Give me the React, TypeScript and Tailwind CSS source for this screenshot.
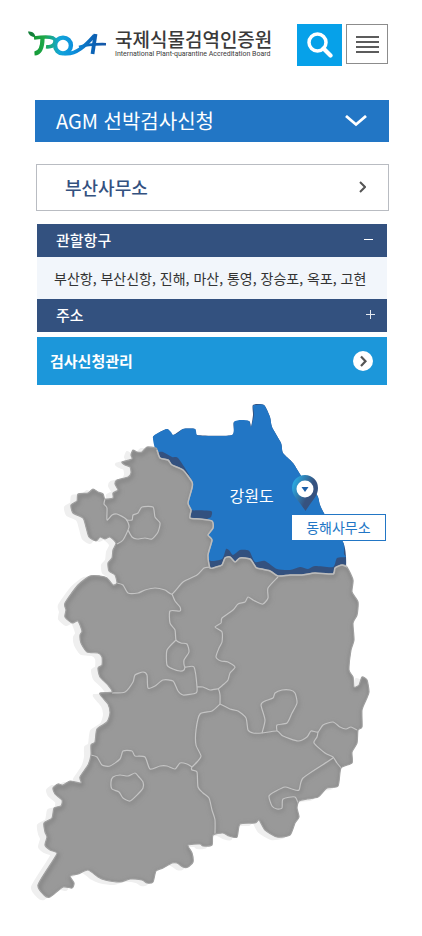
import { useState } from "react";

type Pt = [number, number];

function parse(s: string): Pt[] {
  return s
    .trim()
    .split(/\s+/)
    .map((p) => p.split(",").map(Number) as Pt);
}

// Catmull-Rom spline through every point
function curve(s: string, closed = false): string {
  const p = parse(s);
  const n = p.length;
  const at = (i: number): Pt =>
    closed ? p[(i + n) % n] : p[Math.max(0, Math.min(n - 1, i))];
  let d = `M${p[0][0]},${p[0][1]}`;
  const end = closed ? n : n - 1;
  for (let i = 0; i < end; i++) {
    const [a, b, c, e] = [at(i - 1), at(i), at(i + 1), at(i + 2)];
    const k = 9;
    d += `C${b[0] + (c[0] - a[0]) / k},${b[1] + (c[1] - a[1]) / k} ${c[0] - (e[0] - b[0]) / k},${c[1] - (e[1] - b[1]) / k} ${c[0]},${c[1]}`;
  }
  return closed ? d + "Z" : d;
}

const land = curve(
  `156,448 147,447 142,452 137,452 133,450 131,455 132,459 122,462 125,465 130,467 131,473 128,477 117,480
  115,484 118,490 113,493 113,498 105,499 103,494 98,492 93,489 88,493 78,494 77,501 71,505 73,513 83,518 86,527
  89,537 96,541 100,537 105,539 110,537 116,543 113,550 112,558 108,563 109,571 115,575 117,583 113,585 107,578
  100,576 90,576 78,585 65,603 66,610 65,617 72,623 78,621 82,631 80,635 81,643 87,652 98,653 102,657 102,665
  98,668 100,677 108,685 112,692 100,693 102,697 108,704 110,713 107,722 97,729 95,742 91,745 91,755 88,765
  80,777 81,783 70,781 63,785 58,784 53,788 55,794 62,800 61,806 54,808 52,818 44,823 45,832 47,837 45,845 50,850
  57,853 52,862 38,885 44,895 50,897 63,887 72,888 74,883 70,876 78,874 88,870 98,877 105,880 120,882 130,879
  142,880 147,883 153,882 156,871 163,868 172,863 177,863 183,867 188,867 193,862 192,853 188,845 200,844
  203,846 212,845 213,835 223,833 229,836 237,837 240,824 255,823 259,820 265,830 277,837 290,835 295,823 299,817
  297,808 299,801 307,799 318,797 327,788 338,786 341,768 352,763 352,752 357,743 358,730 362,727 362,710
  366,700 369,692 367,680 362,677 359,685 354,687 353,677 349,670 351,650 354,640 353,623 357,615 358,602
  352,592 353,580 347,567 342,565 335,568 333,574 315,573 302,575 290,575 278,576 270,571 257,568 255,566
  250,559 240,558 235,562 230,557 225,558 222,565 216,567 210,568 208,555 212,540 208,535 213,528 212,521
  200,519 190,518 191,510 188,503 192,488 192,482 183,470 172,465 168,460 160,458 157,450`,
  true,
);

const gangwonBase = curve(
  `153,437 167,429 173,435 183,429 195,429 197,435 232,435 234,422 249,421 251,427 253,415 253,405 264,405
  270,417 272,427 281,443 283,453 293,463 302,477 317,495 320,505 325,515 343,542 346,557 345,572 333,578
  278,582 250,572 205,574 204,530 186,524 182,480 155,460 158,447`,
  true,
);

const gangwonTop = curve(
  `153,437 160,432 167,429 171,432 173,435 178,433 183,429 195,429 197,435 205,436 232,435 234,422 241,420 249,421
  251,427 254,415 253,406 256,405 264,405 270,417 272,427 281,443 283,453 293,463 302,477 317,495 320,505 325,515
  343,542 344,554 346,557 337,558 333,567 315,566 308,569 300,567 290,570 277,569 265,561 255,562 250,552
  247,550 240,550 233,555 229,550 226,549 222,559 209,560 204,540 207,520 211,517 211,511 191,510 188,503
  192,488 192,482 188,473 178,458 172,457 163,452 156,451`,
  true,
);

const borders = [
  curve("105,499 104,504 107,508 107,520 112,515 117,514 126,519 129,527 123,540 117,544"),
  curve(
    "126,520 132,520 133,515 138,513 142,507 153,507 155,517 160,523 158,532 152,539 145,538 137,539 132,537 128,530",
  ),
  curve("117,583 123,585 128,593 138,593 145,590 155,588 165,590 172,594 183,582 197,575 204,568 210,567"),
  curve(
    `172,594 175,601 180,607 180,611 170,611 170,623 175,630 176,640 181,643 187,644 189,652 184,660 185,667
    194,667 197,687 196,693 183,695 178,691 173,681 163,680 155,686 148,688 147,675 143,672 135,675 133,682
    125,692 112,693`,
  ),
  curve("176,640 167,650 167,665 173,669 180,671 184,670 185,667"),
  curve("197,687 203,687 210,690 218,689 220,695 220,704"),
  curve(
    `278,577 268,588 268,598 263,604 257,602 253,600 248,597 245,602 238,604 233,610 222,618 221,623 215,627
    222,632 222,642 219,648 216,657 221,661 228,662 235,667 230,673 228,680 224,684 218,689`,
  ),
  curve(
    `220,704 212,711 200,714 196,730 196,745 201,756 197,762 192,767 192,770 197,772 198,787 203,793 209,798
    212,810 215,820 215,834`,
  ),
  curve(
    `220,704 230,709 238,711 246,718 248,730 253,733 262,733 277,731 283,736 298,741 307,737 311,731 318,732
    323,725 333,722 340,727 346,729 351,727 357,730`,
  ),
  curve(
    "262,733 265,720 261,705 265,701 273,698 275,693 282,690 290,690 295,693 297,703 292,713 287,723 277,725 277,731",
  ),
  curve("318,732 317,737 314,743 325,753 333,757 337,763 342,769"),
  curve(
    `333,758 327,762 303,778 299,790 292,789 285,787 276,791 269,796 272,806 277,809 282,808 283,799 295,797
    299,806`,
  ),
  curve(
    `91,755 97,757 102,765 110,766 120,759 123,751 132,751 135,756 145,757 150,769 160,766 167,766 175,769
    180,763 187,764 192,767`,
  ),
  curve("113,777 120,775 128,776 135,773 139,777 143,782 143,788 138,794 130,801 123,798 119,792 112,789 111,782", true),
];

const kr = "font-['Noto_Sans_CJK_KR',sans-serif]";

function Logo() {
  return (
    <a href="#" className="flex items-start gap-2 pt-1 text-[#3a3a3a]">
      <svg viewBox="28 30 79 27" className="mt-[2px] h-[27px] w-[79px] shrink-0" aria-hidden="true">
        <defs>
          <linearGradient id="poa" gradientUnits="userSpaceOnUse" x1="34" y1="0" x2="104" y2="0">
            <stop offset="0" stopColor="#149a35" />
            <stop offset="0.15" stopColor="#1fa84a" />
            <stop offset="0.36" stopColor="#12a6d8" />
            <stop offset="0.55" stopColor="#0c90dd" />
            <stop offset="0.85" stopColor="#0b62b5" />
            <stop offset="1" stopColor="#1558a8" />
          </linearGradient>
        </defs>
        <path d="M28,31.500c4,0 6.500,1 7.500,5.500c-4,0-6.500-1.500-7.500-5.500Z" fill="#14803a" />
        <g fill="none" stroke="url(#poa)">
          <path d="M34,38C41,37 48,36 53,38c4,2 2,7.500-2.500,8.500c-2,.6-3,.5-4.500,.3" strokeWidth="3.600" />
          <path d="M42.500,38C42.500,46 41,53 34.500,53.500" strokeWidth="4.200" />
          <ellipse cx="63" cy="45.500" rx="7.900" ry="7.900" strokeWidth="4.400" />
          <path d="M64,53.500C76,55.500 86,45 94.500,35.500" strokeWidth="3.600" />
          <path d="M95.500,34L92.500,54" strokeWidth="3.800" />
          <path d="M79,47C86,44.500 96,44 106,44.200" strokeWidth="2.600" />
        </g>
      </svg>
      <span className="block whitespace-nowrap">
        <span className="block text-[19px] font-medium leading-[21px]">국제식물검역인증원</span>
        <span className="block font-[Roboto,sans-serif] text-[7px] leading-[11px]">
          International Plant-quarantine Accreditation Board
        </span>
      </span>
    </a>
  );
}

function KoreaMap() {
  return (
    <section aria-label="지역별 사무소" className="relative mx-auto mt-2.5 w-full max-w-[422px]">
      <svg viewBox="0 395 422 541" className="block w-full" aria-hidden="true">
        <defs>
          <clipPath id="landClip">
            <path d={land} />
          </clipPath>
          <filter id="soft" x="-5%" y="-5%" width="110%" height="110%">
            <feGaussianBlur stdDeviation="2" />
          </filter>
          <linearGradient id="pin" x1="0" y1="0" x2="1" y2="0.600">
            <stop offset="0.150" stopColor="#2ba6de" />
            <stop offset="0.700" stopColor="#36527f" />
          </linearGradient>
        </defs>
        <path d={land} fill="#efefef" stroke="#efefef" strokeWidth="2" transform="translate(-6 2)" />
        <path d={gangwonBase} fill="#33517f" />
        <path d={gangwonTop} fill="#2276c5" />
        <path d={land} fill="#999999" />
        <g clipPath="url(#landClip)" fill="none">
          <g stroke="#808080" strokeWidth="3" filter="url(#soft)">
            <path d={land} transform="translate(1 2)" />
            {borders.map((d, i) => (
              <path key={i} d={d} transform="translate(1 2)" opacity="0.700" />
            ))}
          </g>
          <g stroke="#c4c4c4" strokeWidth="1.200" strokeLinejoin="round">
            {borders.map((d, i) => (
              <path key={i} d={d} />
            ))}
          </g>
        </g>
        <path d={land} fill="none" stroke="#a0a0a0" strokeWidth="1.200" />
        <path
          d={curve(
            `157,450 160,458 168,460 172,465 183,470 192,482 192,488 188,503 191,510 190,518 200,519 212,521
            213,528 208,535 212,540 208,555 210,568 216,567 222,565 225,558 230,557 235,562 240,558 250,559 255,566
            257,568 270,571 278,576 290,575 302,575 315,573 333,574 335,568 342,565 347,567`,
          )}
          fill="none"
          stroke="#bcbcbc"
          strokeWidth="1.500"
        />
        <path d="M292,488a13,13 0 0 1 26,0c0,8-5.500,12-12.500,23c-7-11-13.500-15-13.500-23Z" fill="url(#pin)" />
        <circle cx="305" cy="489" r="8.500" fill="#fff" />
        <path d="M301.500,487h7l-3.500,5Z" fill="#1c5fa8" />
      </svg>
      <span className="absolute left-[54.400%] top-[16.400%] text-base leading-[22px] text-white">강원도</span>
      <button
        type="button"
        className="absolute left-[69%] top-[22%] flex h-[27px] items-center border border-[#2276c5] bg-white px-[14px] pb-0.5 text-sm leading-5 text-[#2276c5]"
      >
        동해사무소
      </button>
    </section>
  );
}

export default function App() {
  const [portsOpen, setPortsOpen] = useState(true);
  const [addressOpen, setAddressOpen] = useState(false);

  return (
    <main className={`${kr} w-full bg-white`} lang="ko">
      <header className="flex items-start justify-between pl-7 pr-[34px] pt-6">
        <Logo />
        <div className="flex gap-1">
          <button
            type="button"
            aria-label="검색"
            className="flex h-[42px] w-[45px] items-center justify-center bg-[#06a1e9]"
          >
            <svg viewBox="0 0 26 26" className="h-[26px] w-[26px]" fill="none" stroke="#fff">
              <circle cx="10.500" cy="10.500" r="8.500" strokeWidth="3.500" />
              <path d="M16.500,16.500L23.500,23.500" strokeWidth="4.200" strokeLinecap="round" />
            </svg>
          </button>
          <button
            type="button"
            aria-label="메뉴"
            className="flex h-10 w-[42px] items-center justify-center border border-[#8c8c8c] bg-white"
          >
            <svg viewBox="0 0 23 17" className="h-[17px] w-[23px]" fill="#5c5c5c">
              <path d="M0,0h23v2H0ZM0,5h23v2H0ZM0,10h23v2H0ZM0,15h23v2H0Z" />
            </svg>
          </button>
        </div>
      </header>

      <nav className="mt-[34px] pl-[35px] pr-[33px]">
        <button
          type="button"
          className="flex h-[42px] w-full items-center justify-between bg-[#2276c5] pl-[21px] pr-[22px] text-xl leading-7 text-white"
        >
          AGM 선박검사신청
          <svg viewBox="0 0 22 12" className="h-3 w-[22px]" fill="none" stroke="#fff" strokeWidth="2.800">
            <path d="M1,1L11,9.500L21,1" />
          </svg>
        </button>
        <a
          href="#"
          className="ml-px mt-[22px] flex h-[47px] items-center justify-between border border-[#b9bcc2] pb-0.5 pl-7 pr-[22px] text-lg font-medium leading-6 text-[#33517f]"
        >
          부산사무소
          <svg viewBox="0 0 7 12" className="h-3 w-[7px]" fill="none" stroke="#555" strokeWidth="2">
            <path d="M1,1L6,6L1,11" />
          </svg>
        </a>
      </nav>

      <section className="mt-[13px] pl-[37px] pr-[35px]">
        <button
          type="button"
          aria-expanded={portsOpen}
          onClick={() => setPortsOpen(!portsOpen)}
          className="flex h-[33px] w-full items-center justify-between bg-[#33517f] pb-0.5 pl-[19px] pr-3.5 text-[15px] font-medium leading-5 text-white"
        >
          관할항구
          <svg viewBox="0 0 9 9" className="h-[9px] w-[9px]" stroke="#fff">
            <path d={portsOpen ? "M0,4.500H9" : "M0,4.500H9M4.500,0V9"} />
          </svg>
        </button>
        {portsOpen && (
          <p className="flex min-h-[42px] items-center bg-[#f2f6fb] pl-[17px] text-sm leading-5 text-[#333]">
            부산항, 부산신항, 진해, 마산, 통영, 장승포, 옥포, 고현
          </p>
        )}
        <button
          type="button"
          aria-expanded={addressOpen}
          onClick={() => setAddressOpen(!addressOpen)}
          className="flex h-[33px] w-full items-center justify-between bg-[#33517f] pb-0.5 pl-[19px] pr-3 text-[15px] font-medium leading-5 text-white"
        >
          주소
          <svg viewBox="0 0 9 9" className="h-[9px] w-[9px]" stroke="#e4e9f1">
            <path d={addressOpen ? "M0,4.500H9" : "M0,4.500H9M4.500,0V9"} />
          </svg>
        </button>
        <a
          href="#"
          className="mt-[5px] flex h-12 items-center justify-between bg-[#1c97da] pl-[13px] pr-3.5 text-[15px] font-bold leading-5 text-white"
        >
          검사신청관리
          <svg viewBox="0 0 20 20" className="h-5 w-5" fill="none">
            <circle cx="10" cy="10" r="10" fill="#fff" />
            <path d="M8,5.500L12.500,10.200L8,15" stroke="#555" strokeWidth="2.200" />
          </svg>
        </a>
      </section>

      <KoreaMap />
    </main>
  );
}
